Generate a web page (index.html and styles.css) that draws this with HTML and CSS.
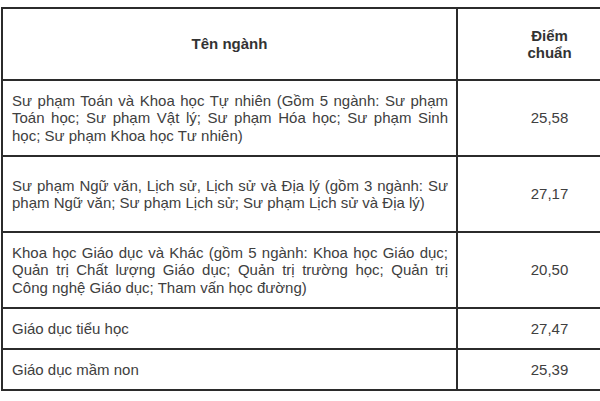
FILE: index.html
```html
<!DOCTYPE html>
<html lang="vi">
<head>
<meta charset="utf-8">
<link rel="stylesheet" href="styles.css">
</head>
<body>
<div class="frame">
<table class="score-table">
  <colgroup>
    <col class="col-name">
    <col class="col-score">
  </colgroup>
  <tr class="row-head">
    <th>Tên ngành</th>
    <th>Điểm<br>chuẩn</th>
  </tr>
  <tr class="row-tall">
    <td class="name">Sư phạm Toán và Khoa học Tự nhiên (Gồm 5 ngành: Sư phạm Toán học; Sư phạm Vật lý; Sư phạm Hóa học; Sư phạm Sinh học; Sư phạm Khoa học Tư nhiên)</td>
    <td class="score">25,58</td>
  </tr>
  <tr class="row-tall">
    <td class="name">Sư phạm Ngữ văn, Lịch sử, Lịch sử và Địa lý (gồm 3 ngành: Sư phạm Ngữ văn; Sư phạm Lịch sử; Sư phạm Lịch sử và Địa lý)</td>
    <td class="score">27,17</td>
  </tr>
  <tr class="row-tall">
    <td class="name">Khoa học Giáo dục và Khác (gồm 5 ngành: Khoa học Giáo dục; Quản trị Chất lượng Giáo dục; Quản trị trường học; Quản trị Công nghệ Giáo dục; Tham vấn học đường)</td>
    <td class="score">20,50</td>
  </tr>
  <tr class="row-short">
    <td class="name">Giáo dục tiểu học</td>
    <td class="score">27,47</td>
  </tr>
  <tr class="row-short">
    <td class="name">Giáo dục mầm non</td>
    <td class="score">25,39</td>
  </tr>
</table>
</div>
</body>
</html>
```
FILE: styles.css
```css
html, body {
  margin: 0;
  padding: 0;
  background: #ffffff;
}

.frame {
  width: 600px;
  height: 401px;
  overflow: hidden;
  padding: 7px 0 0 1px;
  box-sizing: border-box;
}

.score-table {
  border-collapse: collapse;
  width: 640px;
  table-layout: fixed;
  font-family: "Liberation Sans", Arial, sans-serif;
  font-size: 15px;
  line-height: 17.5px;
  color: #404040;
}

.col-name { width: 455px; }
.col-score { width: 185px; }

.score-table th,
.score-table td {
  border: 2px solid #2b2b2b;
  vertical-align: middle;
}

.score-table th {
  font-weight: bold;
  text-align: center;
  color: #333;
}

.row-head { height: 72px; }
.row-tall { height: 76px; }
.row-short { height: 41px; }

.name {
  text-align: justify;
  padding: 0 8px 0 9px;
}

.score {
  text-align: center;
  padding: 0;
}
```
